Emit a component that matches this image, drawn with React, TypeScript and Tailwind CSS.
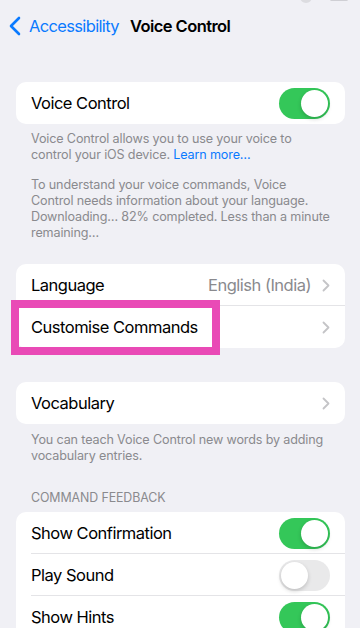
import React from "react";

const font = { fontFamily: "Inter, 'Liberation Sans', sans-serif" };

function Toggle({ on }: { on: boolean }) {
  return (
    <div
      className={`relative h-[31px] w-[51px] shrink-0 rounded-full ${on ? "bg-[#34c759]" : "bg-[#e9e9ea]"}`}
    >
      <div
        className={`absolute top-[2px] h-[27px] w-[27px] rounded-full bg-white shadow-[0_2px_4px_rgba(0,0,0,0.18)] ${on ? "left-[22px]" : "left-[2px]"}`}
      />
    </div>
  );
}

function Chevron() {
  return (
    <svg width="8" height="13" viewBox="0 0 8 13" className="shrink-0">
      <path d="M1.5 1.5 L6.5 6.5 L1.5 11.5" fill="none" stroke="#c4c4c7" strokeWidth="1.8" strokeLinecap="round" strokeLinejoin="round" />
    </svg>
  );
}

function Row({ label, right, divider }: { label: string; right: React.ReactNode; divider?: boolean }) {
  return (
    <div className="relative flex h-[42px] items-center justify-between pl-[15px] pr-[15px]">
      <span className="text-[16.5px] text-black tracking-[-0.5px]">{label}</span>
      <div className="flex items-center gap-[11px]">{right}</div>
      {divider && <div className="absolute bottom-0 left-[15px] right-0 h-px bg-[#e4e4e7]" />}
    </div>
  );
}

export default function App() {
  return (
    <div className="relative h-[628px] w-[360px] overflow-hidden bg-[#f0f0f5]" style={font}>
      {/* status bar remnants */}
      <div className="absolute left-[300px] top-[-9px] h-[12px] w-[12px] rounded-full bg-[#dcdce0]" />
      <div className="absolute left-[330px] top-[-2px] h-[3px] w-[18px] rounded-sm bg-[#cfcfd4]" />

      {/* nav */}
      <div className="flex h-[52px] items-center pl-[9px]">
        <svg width="12" height="20" viewBox="0 0 12 20" className="mr-[8px]">
          <path d="M10 2 L2 10 L10 18" fill="none" stroke="#0a7aff" strokeWidth="2.6" strokeLinecap="round" strokeLinejoin="round" />
        </svg>
        <span className="text-[16.5px] text-[#0a7aff] tracking-[-0.65px]">Accessibility</span>
        <span className="ml-[11px] text-[16.5px] font-semibold text-black tracking-[-0.55px]">Voice Control</span>
      </div>

      {/* card 1 */}
      <div className="ml-4 mr-[15px] mt-[30px] overflow-hidden rounded-[10px] bg-white">
        <Row label="Voice Control" right={<Toggle on />} />
      </div>
      <div className="ml-4 mr-[15px] pl-[15px] pr-[15px] pt-[7px] text-[12.6px] leading-[16px] text-[#8a8a8e] tracking-[-0.15px]">
        <p>
          Voice Control allows you to use your voice to control your iOS device.{" "}
          <span className="text-[#0a7aff]">Learn more…</span>
        </p>
        <p className="mt-[14px]">
          To understand your voice commands, Voice Control needs information about your language. Downloading… 82% completed. Less than a minute remaining…
        </p>
      </div>

      {/* card 2 */}
      <div className="ml-4 mr-[15px] mt-[23px] overflow-hidden rounded-[10px] bg-white">
        <Row
          label="Language"
          divider
          right={
            <>
              <span className="text-[16.5px] text-[#8a8a8e] tracking-[-0.5px]">English (India)</span>
              <Chevron />
            </>
          }
        />
        <Row label="Customise Commands" right={<Chevron />} />
      </div>

      {/* card 3 */}
      <div className="ml-4 mr-[15px] mt-[34px] overflow-hidden rounded-[10px] bg-white">
        <Row label="Vocabulary" right={<Chevron />} />
      </div>
      <div className="ml-4 mr-[15px] px-[15px] pt-[8px] text-[12.6px] leading-[16px] text-[#8a8a8e] tracking-[-0.15px]">
        <p>You can teach Voice Control new words by adding vocabulary entries.</p>
      </div>

      <div className="ml-4 mr-[15px] mt-[26px] px-[15px] text-[12.4px] leading-[16px] text-[#8a8a8e] uppercase tracking-[-0.1px]">
        Command Feedback
      </div>

      {/* card 4 */}
      <div className="ml-4 mr-[15px] mt-[6px] overflow-hidden rounded-[10px] bg-white">
        <Row label="Show Confirmation" divider right={<Toggle on />} />
        <Row label="Play Sound" divider right={<Toggle on={false} />} />
        <Row label="Show Hints" right={<Toggle on />} />
      </div>

      {/* highlight overlay */}
      <div className="absolute left-[11px] top-[300px] h-[55px] w-[209px] border-[8px] border-[#e94ab6]" />
    </div>
  );
}
